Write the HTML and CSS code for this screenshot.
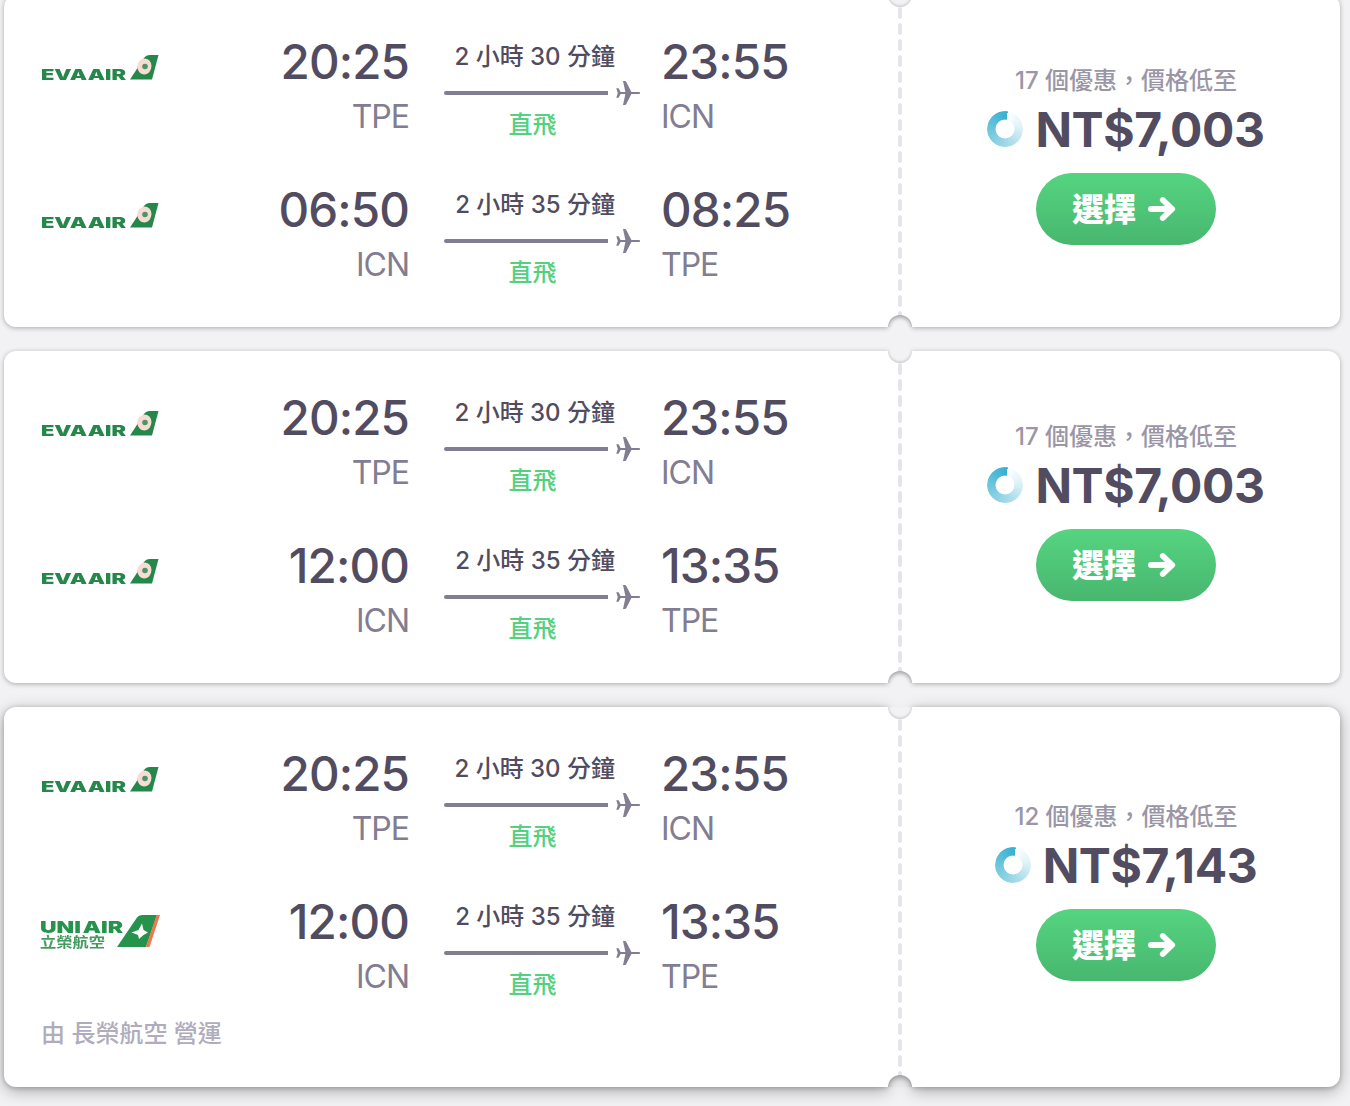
FILE: index.html
```
<!DOCTYPE html>
<html lang="zh-Hant">
<head>
<meta charset="utf-8">
<title>航班</title>
<link rel="stylesheet" href="styles.css">
</head>
<body>
<svg class="defs" aria-hidden="true">
  <symbol id="plane" viewBox="0 0 24 24"><path d="M23 11H15.400L10.300 1.100C9.900.4 9.500 0 8.700 0H7L9.400 11H4.600L2.600 7.300H.3L1.800 12 .3 16.700h2.300l2-3.700H9.400L7 24h1.700c.8 0 1.200-.4 1.600-1.100L15.400 13h7.600c.7 0 1-.5 1-1s-.3-1-1-1z"/></symbol>
  <symbol id="arrow" viewBox="0 0 28 24"><path d="M3 12h21M14.800 3l9.400 9-9.400 9" fill="none" stroke="currentColor" stroke-width="5.800" stroke-linecap="round" stroke-linejoin="round"/></symbol>
  <symbol id="eva" viewBox="0 0 120 60">
    <text x="1" y="42" textLength="85" lengthAdjust="spacingAndGlyphs" class="logo-eva">EVA<tspan dx="-2.500"> AIR</tspan></text>
    <path fill="#25884a" d="M90 41.500 104 20Q106 17 110 17H118.500L112 41.500z"/>
    <path fill="#f6dcd3" d="M97 29Q98 21 105 20.500 111 21 111.500 28 111 35 105 36.500 100 36.500 98 32z"/>
    <circle cx="105" cy="28.500" r="2.800" fill="#4f9468"/>
  </symbol>
  <symbol id="uni" viewBox="0 0 120 60">
    <text x="0" y="35" textLength="83" lengthAdjust="spacingAndGlyphs" class="logo-uni">UNI<tspan dx="-2"> AIR</tspan></text>
    <text x="0" y="49" textLength="65" lengthAdjust="spacingAndGlyphs" class="logo-cjk">立榮航空</text>
    <path fill="#25934b" d="M77 49 97 19.500Q98.500 17 102 17H117L106 49z"/>
    <path fill="#ec7850" d="M116.500 17H120L109.500 49H106z"/>
    <path fill="#fff" d="M102 25.500 103.500 32 108 34.500 103.500 37 99 41 98 37 91.500 34.500 98.500 32z"/>
  </symbol>
</svg>

<main class="list">
  <article class="card">
    <div class="legs">
      <div class="leg">
        <svg class="logo"><use href="#eva"/></svg>
        <div class="stop from"><span class="time">20:25</span><span class="code">TPE</span></div>
        <div class="route"><span class="duration">2 小時 30 分鐘</span><div class="track"><i></i><svg><use href="#plane"/></svg></div><span class="direct">直飛</span></div>
        <div class="stop"><span class="time">23:55</span><span class="code">ICN</span></div>
      </div>
      <div class="leg">
        <svg class="logo"><use href="#eva"/></svg>
        <div class="stop from"><span class="time">06:50</span><span class="code">ICN</span></div>
        <div class="route"><span class="duration">2 小時 35 分鐘</span><div class="track"><i></i><svg><use href="#plane"/></svg></div><span class="direct">直飛</span></div>
        <div class="stop"><span class="time">08:25</span><span class="code">TPE</span></div>
      </div>
    </div>
    <div class="tear"></div>
    <div class="offer">
      <div class="note">17 個優惠，價格低至</div>
      <div class="price"><span class="spinner"></span><span class="amount">NT$7,003</span></div>
      <button class="select"><span>選擇</span><svg><use href="#arrow"/></svg></button>
    </div>
  </article>

  <article class="card">
    <div class="legs">
      <div class="leg">
        <svg class="logo"><use href="#eva"/></svg>
        <div class="stop from"><span class="time">20:25</span><span class="code">TPE</span></div>
        <div class="route"><span class="duration">2 小時 30 分鐘</span><div class="track"><i></i><svg><use href="#plane"/></svg></div><span class="direct">直飛</span></div>
        <div class="stop"><span class="time">23:55</span><span class="code">ICN</span></div>
      </div>
      <div class="leg">
        <svg class="logo"><use href="#eva"/></svg>
        <div class="stop from"><span class="time">12:00</span><span class="code">ICN</span></div>
        <div class="route"><span class="duration">2 小時 35 分鐘</span><div class="track"><i></i><svg><use href="#plane"/></svg></div><span class="direct">直飛</span></div>
        <div class="stop"><span class="time">13:35</span><span class="code">TPE</span></div>
      </div>
    </div>
    <div class="tear"></div>
    <div class="offer">
      <div class="note">17 個優惠，價格低至</div>
      <div class="price"><span class="spinner"></span><span class="amount">NT$7,003</span></div>
      <button class="select"><span>選擇</span><svg><use href="#arrow"/></svg></button>
    </div>
  </article>

  <article class="card raised">
    <div class="legs">
      <div class="leg">
        <svg class="logo"><use href="#eva"/></svg>
        <div class="stop from"><span class="time">20:25</span><span class="code">TPE</span></div>
        <div class="route"><span class="duration">2 小時 30 分鐘</span><div class="track"><i></i><svg><use href="#plane"/></svg></div><span class="direct">直飛</span></div>
        <div class="stop"><span class="time">23:55</span><span class="code">ICN</span></div>
      </div>
      <div class="leg">
        <svg class="logo"><use href="#uni"/></svg>
        <div class="stop from"><span class="time">12:00</span><span class="code">ICN</span></div>
        <div class="route"><span class="duration">2 小時 35 分鐘</span><div class="track"><i></i><svg><use href="#plane"/></svg></div><span class="direct">直飛</span></div>
        <div class="stop"><span class="time">13:35</span><span class="code">TPE</span></div>
      </div>
      <div class="operator">由 長榮航空 營運</div>
    </div>
    <div class="tear"></div>
    <div class="offer">
      <div class="note">12 個優惠，價格低至</div>
      <div class="price"><span class="spinner"></span><span class="amount">NT$7,143</span></div>
      <button class="select"><span>選擇</span><svg><use href="#arrow"/></svg></button>
    </div>
  </article>
</main>
</body>
</html>
```
FILE: styles.css
```
* { box-sizing: border-box; }
html { overflow: hidden; }
body {
  margin: 0;
  height: 1106px;
  overflow: hidden;
  background: #f2f2f4;
  color: #524c61;
  font-family: Inter, "Noto Sans CJK TC", sans-serif;
}
.defs { display: none; }
.list {
  display: flex;
  flex-direction: column;
  gap: 24px;
  width: 1336px;
  margin: -5px 0 0 4px;
}
.card { display: flex; height: 332px; --shade: 0 1px 5px rgba(0,0,0,.3); }
.card.raised { height: 380px; --shade: 0 4px 16px rgba(0,0,0,.3), 0 1px 5px rgba(0,0,0,.22); }
.legs, .offer { background: #fff; box-shadow: var(--shade); }
.legs {
  width: 884px;
  padding: 37px 36px 0;
  border-radius: 12px 0 0 12px;
}
.offer {
  width: 428px;
  padding-bottom: 12px;
  border-radius: 0 12px 12px 0;
  display: flex;
  flex-direction: column;
  align-items: center;
  justify-content: center;
}
.leg { display: flex; height: 148px; }
.logo { width: 120px; height: 60px; margin-top: 6px; filter: blur(.7px); }
.logo-eva { font: 900 14.500px Inter, sans-serif; fill: #25884a; }
.logo-uni { font: 900 16.500px Inter, sans-serif; fill: #25934b; }
.logo-cjk { font: 700 14px "Noto Sans CJK TC", sans-serif; fill: #439b60; }
.stop { display: flex; flex-direction: column; }
.from { width: 249px; align-items: flex-end; }
.time { font-size: 47.500px; line-height: 60px; font-weight: 450; letter-spacing: -.900px; }
.code { font-size: 32px; line-height: 49px; letter-spacing: -1px; color: #827d91; }
.route {
  width: 196px;
  margin: 0 21px 0 35px;
  display: flex;
  flex-direction: column;
}
.duration, .direct { font-size: 24px; line-height: 32px; white-space: nowrap; }
.duration { height: 49px; padding: 9px 25px 0 0; text-align: right; font-weight: 450; }
.track { display: flex; align-items: center; gap: 8px; height: 24px; }
.track i { width: 164px; height: 4px; border-radius: 2px 0 0 2px; background: #827d91; }
.track svg { width: 24px; height: 24px; fill: #827d91; }
.direct { width: 177px; padding-top: 4px; text-align: center; color: #54d180; font-weight: 500; }
.operator { margin-top: -22px; padding-left: 1px; font-size: 24px; line-height: 32px; color: #b0acbb; font-weight: 450; }
.tear {
  position: relative;
  width: 24px;
  overflow: hidden;
  background: #fff url("data:image/svg+xml,%3Csvg xmlns='http://www.w3.org/2000/svg' width='4' height='16'%3E%3Crect width='4' height='12' rx='2' fill='%23e6e4eb'/%3E%3C/svg%3E") 10px 12px / 4px 16px repeat-y;
}
.tear::before, .tear::after {
  content: "";
  position: absolute;
  left: 0;
  width: 24px;
  height: 24px;
  border-radius: 50%;
  background: #f2f2f4;
}
.tear::before { top: -12px; box-shadow: inset 0 -1px 3px rgba(0,0,0,.2); }
.tear::after { bottom: -12px; box-shadow: inset 0 2px 4px rgba(0,0,0,.36); }
.raised .tear::after { background: #e6e6e8; box-shadow: inset 0 2px 6px rgba(0,0,0,.4); }
.note { height: 32px; line-height: 32px; font-size: 24px; color: #9a96a6; font-weight: 500; }
.price { display: flex; align-items: center; height: 66px; gap: 12px; }
.amount { font-size: 48px; line-height: 66px; font-weight: 700; letter-spacing: -.400px; }
.spinner {
  width: 36px;
  height: 36px;
  margin-top: -3px;
  border-radius: 50%;
  background: conic-gradient(from 9deg, #fff, #e2f4f9 18%, #a9dcea 42%, #7bcbe0 65%, #35afd1);
  mask: radial-gradient(circle, transparent 9px, #000 9.800px);
}
.select {
  display: flex;
  align-items: center;
  gap: 12px;
  width: 180px;
  height: 72px;
  margin-top: 10px;
  padding: 0 36px;
  border: 0;
  border-radius: 36px;
  background: linear-gradient(#55d480, #48b76f);
  color: #fff;
  font: 800 32px/70px Inter, "Noto Sans CJK TC", sans-serif;
}
.select span { padding-top: 2px; }
.select svg { width: 28px; height: 24px; flex: none; }
```
